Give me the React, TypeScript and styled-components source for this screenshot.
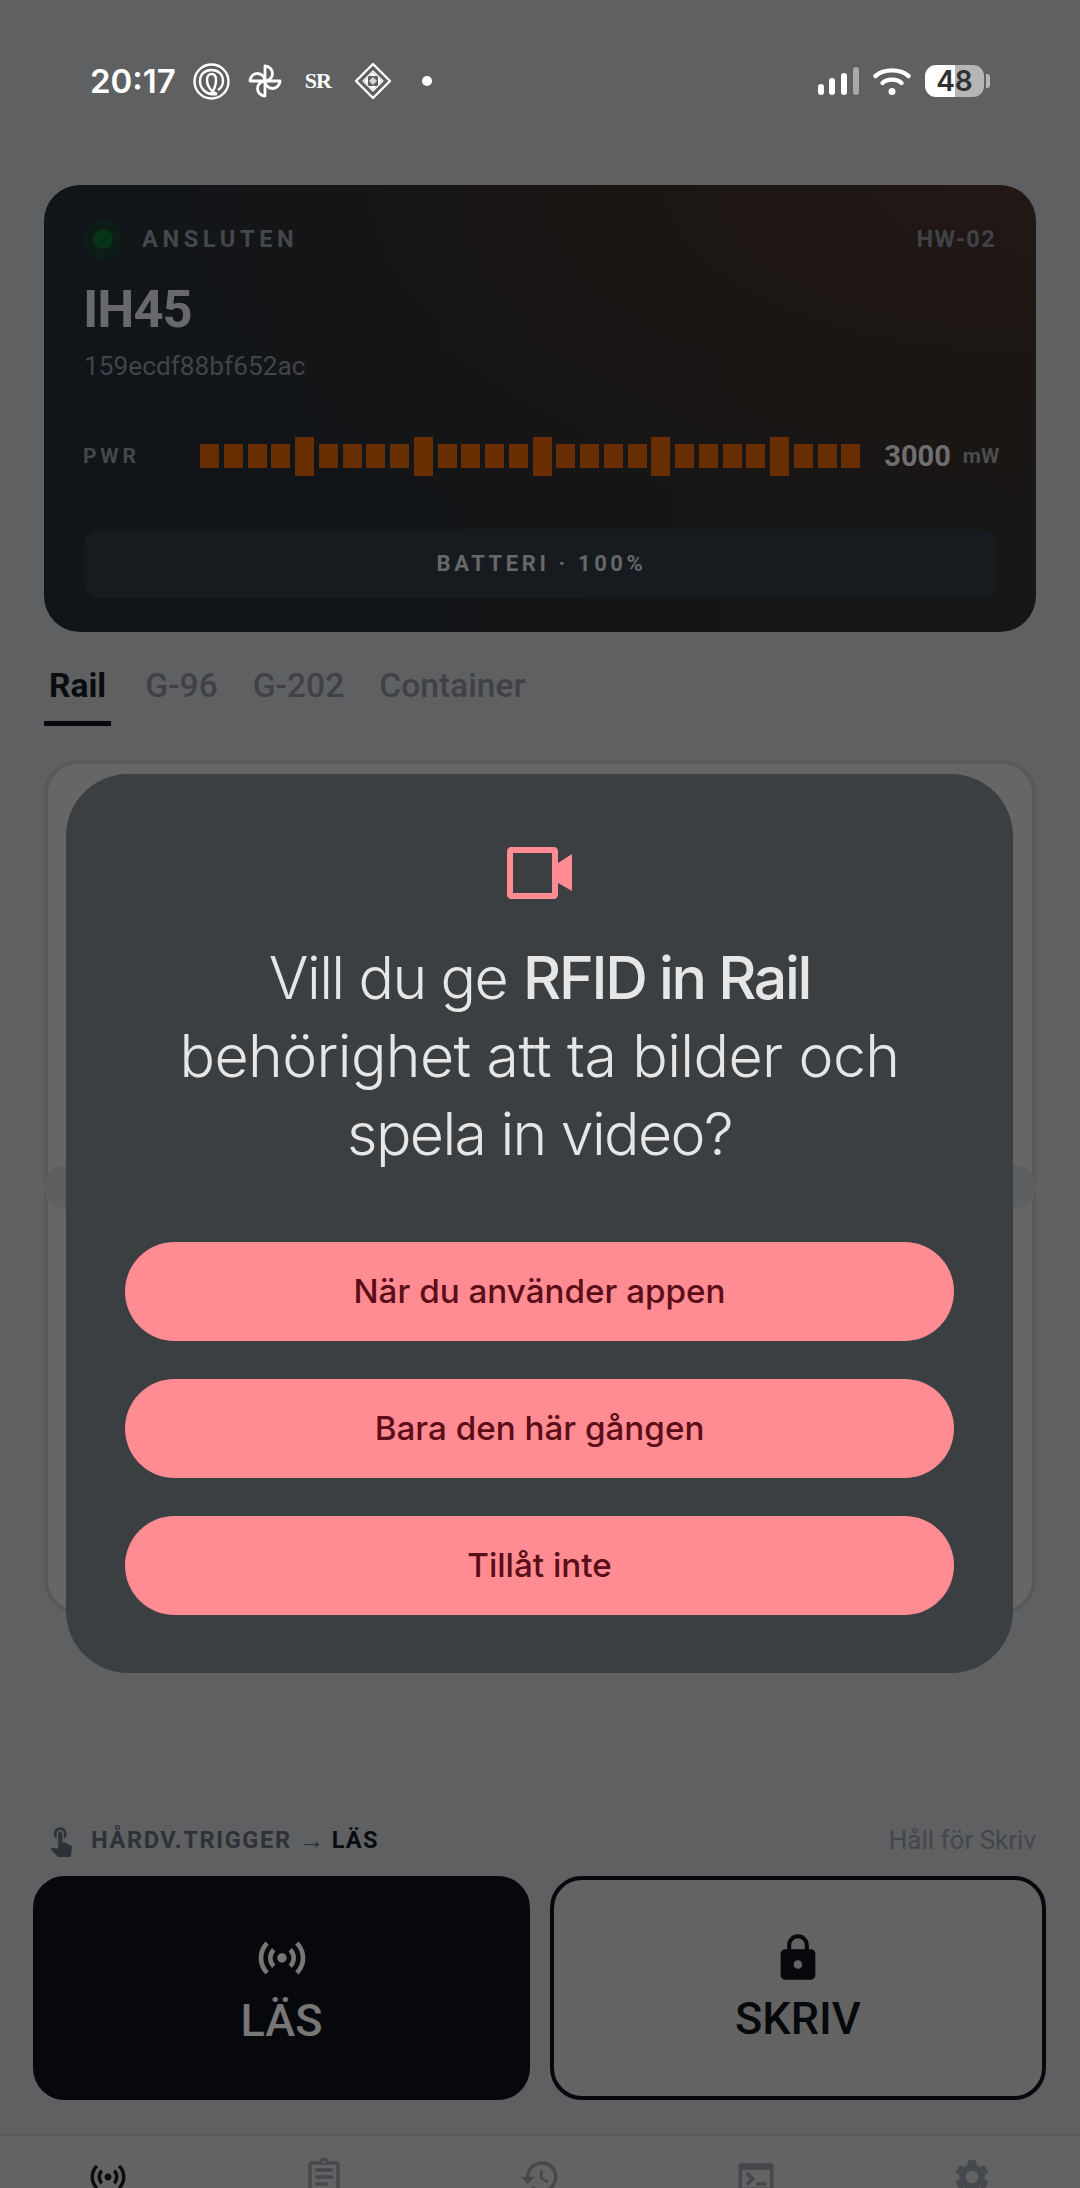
import React from "react"
import styled, { createGlobalStyle } from "styled-components"
import {
  MdHistory,
  MdLock,
  MdOutlineAssignment,
  MdSensors,
  MdSettings,
  MdTerminal,
  MdTouchApp,
} from "react-icons/md"

const BAR_COUNT = 28
const TABS = ["Rail", "G-96", "G-202", "Container"]
const DIALOG_ACTIONS = ["När du använder appen", "Bara den här gången", "Tillåt inte"]

const GlobalStyle = createGlobalStyle`
  html, body {
    margin: 0;
    padding: 0;
    background: #606163;
  }
  * {
    box-sizing: border-box;
  }
`

const Page = styled.div`
  position: relative;
  width: 1080px;
  height: 2188px;
  overflow: hidden;
  display: flex;
  flex-direction: column;
  background: #5f6062;
  font-family: Roboto, "Liberation Sans", sans-serif;
`

const StatusBar = styled.div`
  height: 162px;
  flex: none;
  display: flex;
  align-items: center;
  justify-content: space-between;
  padding: 0 90px 0 90px;
  color: #fff;
`

const StatusGroup = styled.div`
  display: flex;
  align-items: center;
`

const Clock = styled.span`
  font-family: Inter, sans-serif;
  font-size: 33px;
  font-weight: 600;
  margin-right: 17px;
`

const StatusIcon = styled.svg<{ $gap?: number }>`
  display: block;
  margin-right: ${(p) => p.$gap ?? 0}px;
`

const SrMark = styled.span`
  font-family: "Liberation Serif", serif;
  font-size: 22px;
  font-weight: 700;
  letter-spacing: -1px;
  width: 26px;
  margin-right: 23px;
`

const NotifyDot = styled.span`
  width: 10px;
  height: 10px;
  margin-left: 30px;
  border-radius: 50%;
  background: #fff;
`

const Battery = styled.div`
  width: 59px;
  height: 32px;
  border-radius: 11px;
  background: linear-gradient(90deg, #fff 51%, #b6b6b6 51%);
  color: #303133;
  font-family: Inter, sans-serif;
  font-size: 28px;
  font-weight: 600;
  line-height: 32px;
  text-align: center;
`

const BatteryCap = styled.span`
  width: 4px;
  height: 14px;
  margin-left: 2px;
  border-radius: 0 3px 3px 0;
  background: #b6b6b6;
`

const DeviceCard = styled.section`
  flex: none;
  height: 447px;
  margin: 23px 44px 0;
  padding: 34px 40px;
  border-radius: 36px;
  display: flex;
  flex-direction: column;
  background:
    radial-gradient(ellipse at 100% 0%, #231815 0%, #1b1614 28%, rgba(24, 22, 21, 0) 68%),
    linear-gradient(90deg, #10151a 0%, #131517 45%, #171716 100%);
`

const CardHeader = styled.div`
  height: 40px;
  display: flex;
  align-items: center;
`

const ConnectedDot = styled.span`
  width: 20px;
  height: 20px;
  margin: 0 29px 0 9px;
  border-radius: 50%;
  background: #053418;
  box-shadow: 0 0 0 10px #0e1c17;
`

const ConnectedLabel = styled.span`
  font-size: 23.6px;
  font-weight: 700;
  letter-spacing: 4.6px;
  color: #44474c;
`

const HardwareId = styled.span`
  margin-left: auto;
  font-size: 23.6px;
  font-weight: 700;
  letter-spacing: 1.3px;
  color: #3f4247;
`

const DeviceName = styled.div`
  margin: 20px 0 0 -1px;
  font-size: 52.5px;
  line-height: 60px;
  font-weight: 700;
  letter-spacing: -1px;
  color: #69696b;
`

const DeviceHash = styled.div`
  margin-top: 11px;
  font-size: 26.25px;
  line-height: 32px;
  color: #414449;
`

const PowerRow = styled.div`
  margin-top: 54px;
  height: 40px;
  display: flex;
  align-items: center;
  white-space: nowrap;
`

const PowerLabel = styled.span`
  flex: none;
  width: 117px;
  margin-left: -1px;
  font-size: 21px;
  font-weight: 700;
  letter-spacing: 3.8px;
  color: #44474c;
`

const BarTrack = styled.div`
  flex: none;
  display: flex;
  align-items: center;
  gap: 4.75px;
`

const PowerBar = styled.span<{ $tall: boolean }>`
  flex: none;
  width: 19px;
  height: ${(p) => (p.$tall ? 39 : 24)}px;
  background: #682d00;
`

const PowerValue = styled.span`
  flex: none;
  margin-left: 24px;
  font-size: 29px;
  font-weight: 700;
  color: #6f6f70;
`

const PowerUnit = styled.span`
  flex: none;
  margin-left: 12px;
  font-size: 21px;
  font-weight: 700;
  color: #4a4c50;
`

const BatteryStrip = styled.div`
  margin-top: auto;
  height: 69px;
  padding-left: 3px;
  border-radius: 16px;
  display: flex;
  align-items: center;
  justify-content: center;
  background: #171b20;
  font-size: 22px;
  font-weight: 700;
  letter-spacing: 3.6px;
  color: #67686a;
`

const TabBar = styled.div`
  flex: none;
  height: 94px;
  margin: 0 44px;
  display: flex;
  align-items: flex-end;
  gap: 25px;
`

const Tab = styled.div<{ $active: boolean }>`
  height: 66px;
  padding: 6px 5px 0;
  margin-right: ${(p) => (p.$active ? 4 : 0)}px;
  font-size: 33.6px;
  line-height: 40px;
  font-weight: ${(p) => (p.$active ? 700 : 500)};
  color: ${(p) => (p.$active ? "#0a0c0f" : "#3f4147")};
  border-bottom: 5px solid ${(p) => (p.$active ? "#06080b" : "transparent")};
`

const TicketPanel = styled.div`
  position: relative;
  flex: none;
  height: 854px;
  margin: 34px 44px 0;
  border: 4px solid #58595b;
  border-radius: 34px;
  background: #666;

  &::before,
  &::after {
    content: "";
    position: absolute;
    top: 401px;
    width: 44px;
    height: 44px;
    border-radius: 50%;
    background: #5e5f61;
  }
  &::before {
    left: -4px;
  }
  &::after {
    right: -4px;
  }
`

const TriggerRow = styled.div`
  flex: none;
  height: 40px;
  margin: 206px 44px 0;
  display: flex;
  align-items: center;
  color: #2e3137;
`

const TriggerIcon = styled(MdTouchApp)`
  width: 34px;
  height: 34px;
  margin-right: 13px;
`

const TriggerText = styled.span`
  font-size: 23.6px;
  font-weight: 700;
  letter-spacing: 1.6px;
`

const TriggerArrow = styled.span`
  margin: 0 7px;
  font-size: 26px;
`

const TriggerMode = styled(TriggerText)`
  color: #0a0c0f;
  letter-spacing: 1.2px;
`

const HoldHint = styled.span`
  margin-left: auto;
  font-size: 26px;
  color: #44464b;
`

const ActionRow = styled.div`
  flex: none;
  height: 224px;
  margin: 16px 34px 0 33px;
  display: grid;
  grid-template-columns: 497px 496px;
  gap: 20px;
`

const ActionButton = styled.div<{ $solid: boolean }>`
  border-radius: 32px;
  display: flex;
  flex-direction: column;
  align-items: center;
  justify-content: center;
  gap: 9px;
  background: ${(p) => (p.$solid ? "#06080b" : "#636363")};
  border: 4px solid #06080b;
  color: ${(p) => (p.$solid ? "#777778" : "#06080b")};
  font-size: 45px;
  line-height: 52px;
  font-weight: 500;
`

const BottomNav = styled.nav`
  flex: none;
  height: 60px;
  margin-top: 34px;
  padding-top: 20px;
  display: grid;
  grid-template-columns: repeat(5, 1fr);
  justify-items: center;
  background: #636363;
  border-top: 2px solid #5a5b5d;
`

const NavSlot = styled.div<{ $active: boolean }>`
  color: ${(p) => (p.$active ? "#0a0c0f" : "#45484c")};
  font-size: 42px;
  line-height: 0;
`

const PermissionDialog = styled.div`
  position: absolute;
  left: 66px;
  top: 774px;
  width: 947px;
  height: 899px;
  padding: 73px 59px 58px;
  border-radius: 62px;
  background: #3c3f42;
  display: flex;
  flex-direction: column;
  align-items: center;
`

const DialogTitle = styled.h1`
  margin: 40px 0 0;
  font-family: Inter, sans-serif;
  font-size: 59px;
  line-height: 78px;
  font-weight: 300;
  letter-spacing: -0.6px;
  white-space: nowrap;
  text-align: center;
  color: #e6e6e6;

  b {
    font-weight: 500;
    letter-spacing: -2.3px;
  }
`

const TightRun = styled.span`
  letter-spacing: -1.6px;
`

const DialogActions = styled.div`
  margin-top: auto;
  width: 100%;
  display: flex;
  flex-direction: column;
  gap: 38px;
`

const DialogButton = styled.div`
  height: 99px;
  padding-bottom: 2px;
  border-radius: 50px;
  display: flex;
  align-items: center;
  justify-content: center;
  background: #ff8b93;
  color: #5c0e18;
  font-family: Inter, sans-serif;
  font-size: 33.2px;
  font-weight: 500;
`

const LoopIcon = () => (
  <StatusIcon $gap={18} width="37" height="37" viewBox="0 0 37 37" fill="none" stroke="#fff" strokeWidth="2.4">
    <circle cx="18.5" cy="18.5" r="17" />
    <path d="M24 31C14 33 7 26 7 18C7 11 12 7 18.5 7C25 7 30 11 30 18C30 22 28 25 25 27" />
    <path d="M24 31C19 29 14 24 14 17C14 13 16 11 18.5 11C21 11 23 13 23 17C23 23 21 27 18 31" />
  </StatusIcon>
)

const FanIcon = () => (
  <StatusIcon $gap={23} width="34" height="34" viewBox="0 0 34 34" fill="none" stroke="#fff" strokeWidth="2.8" strokeLinejoin="round">
    {[0, 90, 180, 270].map((angle) => (
      <path key={angle} d="M17 17V2A7.5 7.5 0 0 1 17 17Z" transform={`rotate(${angle} 17 17)`} />
    ))}
  </StatusIcon>
)

const DiamondIcon = () => (
  <StatusIcon width="38" height="38" viewBox="0 0 38 38" fill="none" stroke="#fff" strokeWidth="2.4" strokeLinejoin="round">
    <path d="M19 2L36 19L19 36L2 19Z" />
    <path d="M19 9L29 19L19 29L9 19Z" strokeWidth="1.2" />
    <path d="M19 10L23 14H15ZM19 28L15 24H23ZM10 19L14 15V23ZM28 19L24 23V15Z" fill="#fff" stroke="none" />
    <path d="M19 15L23 19L19 23L15 19Z" fill="#fff" stroke="none" opacity="0.75" />
  </StatusIcon>
)

const SignalIcon = () => (
  <StatusIcon $gap={14} width="41" height="28" viewBox="0 0 41 28">
    <rect x="0" y="17" width="6" height="11" rx="3" fill="#fff" />
    <rect x="11" y="11" width="6" height="17" rx="3" fill="#fff" />
    <rect x="23" y="6" width="6" height="22" rx="3" fill="#fff" />
    <rect x="35" y="0" width="6" height="28" rx="3" fill="#a8a8a8" />
  </StatusIcon>
)

const WifiIcon = () => (
  <StatusIcon $gap={14} width="38" height="28" viewBox="0 0 38 28" fill="none" stroke="#fff" strokeWidth="4.4" strokeLinecap="round">
    <path d="M2.5 9C11 1.5 27 1.5 35.5 9" />
    <path d="M9.5 16C14 11.5 24 11.5 28.5 16" />
    <circle cx="19" cy="24.5" r="3.5" fill="#fff" stroke="none" />
  </StatusIcon>
)

const CameraIcon = () => (
  <svg width="65" height="52" viewBox="0 0 65 52" fill="#ff8b93">
    <path
      fillRule="evenodd"
      d="M4 0H47C49 0 51 2 51 4V16L65 7V44L51 36V48C51 50 49 52 47 52H4C2 52 0 50 0 48V4C0 2 2 0 4 0ZM6 6V46H45V6Z"
    />
  </svg>
)

const App = () => (
  <Page>
    <GlobalStyle />
    <StatusBar>
      <StatusGroup>
        <Clock>20:17</Clock>
        <LoopIcon />
        <FanIcon />
        <SrMark>SR</SrMark>
        <DiamondIcon />
        <NotifyDot />
      </StatusGroup>
      <StatusGroup>
        <SignalIcon />
        <WifiIcon />
        <Battery>48</Battery>
        <BatteryCap />
      </StatusGroup>
    </StatusBar>

    <DeviceCard>
      <CardHeader>
        <ConnectedDot />
        <ConnectedLabel>ANSLUTEN</ConnectedLabel>
        <HardwareId>HW-02</HardwareId>
      </CardHeader>
      <DeviceName>IH45</DeviceName>
      <DeviceHash>159ecdf88bf652ac</DeviceHash>
      <PowerRow>
        <PowerLabel>PWR</PowerLabel>
        <BarTrack>
          {Array.from({ length: BAR_COUNT }, (_, i) => (
            <PowerBar key={i} $tall={i % 5 === 4} />
          ))}
        </BarTrack>
        <PowerValue>3000</PowerValue>
        <PowerUnit>mW</PowerUnit>
      </PowerRow>
      <BatteryStrip>BATTERI · 100%</BatteryStrip>
    </DeviceCard>

    <TabBar>
      {TABS.map((tab) => (
        <Tab key={tab} $active={tab === "Rail"}>
          {tab}
        </Tab>
      ))}
    </TabBar>

    <TicketPanel />

    <TriggerRow>
      <TriggerIcon />
      <TriggerText>HÅRDV.TRIGGER</TriggerText>
      <TriggerArrow>→</TriggerArrow>
      <TriggerMode>LÄS</TriggerMode>
      <HoldHint>Håll för Skriv</HoldHint>
    </TriggerRow>

    <ActionRow>
      <ActionButton $solid>
        <MdSensors size={56} />
        LÄS
      </ActionButton>
      <ActionButton $solid={false}>
        <MdLock size={52} />
        SKRIV
      </ActionButton>
    </ActionRow>

    <BottomNav>
      <NavSlot $active>
        <MdSensors />
      </NavSlot>
      <NavSlot $active={false}>
        <MdOutlineAssignment />
      </NavSlot>
      <NavSlot $active={false}>
        <MdHistory />
      </NavSlot>
      <NavSlot $active={false}>
        <MdTerminal />
      </NavSlot>
      <NavSlot $active={false}>
        <MdSettings />
      </NavSlot>
    </BottomNav>

    <PermissionDialog>
      <CameraIcon />
      <DialogTitle>
        <TightRun>Vill du ge</TightRun> <b>RFID in Rail</b>
        <br />
        behörighet att ta bilder och
        <br />
        <TightRun>spela in video?</TightRun>
      </DialogTitle>
      <DialogActions>
        {DIALOG_ACTIONS.map((label) => (
          <DialogButton key={label}>{label}</DialogButton>
        ))}
      </DialogActions>
    </PermissionDialog>
  </Page>
)

export default App
